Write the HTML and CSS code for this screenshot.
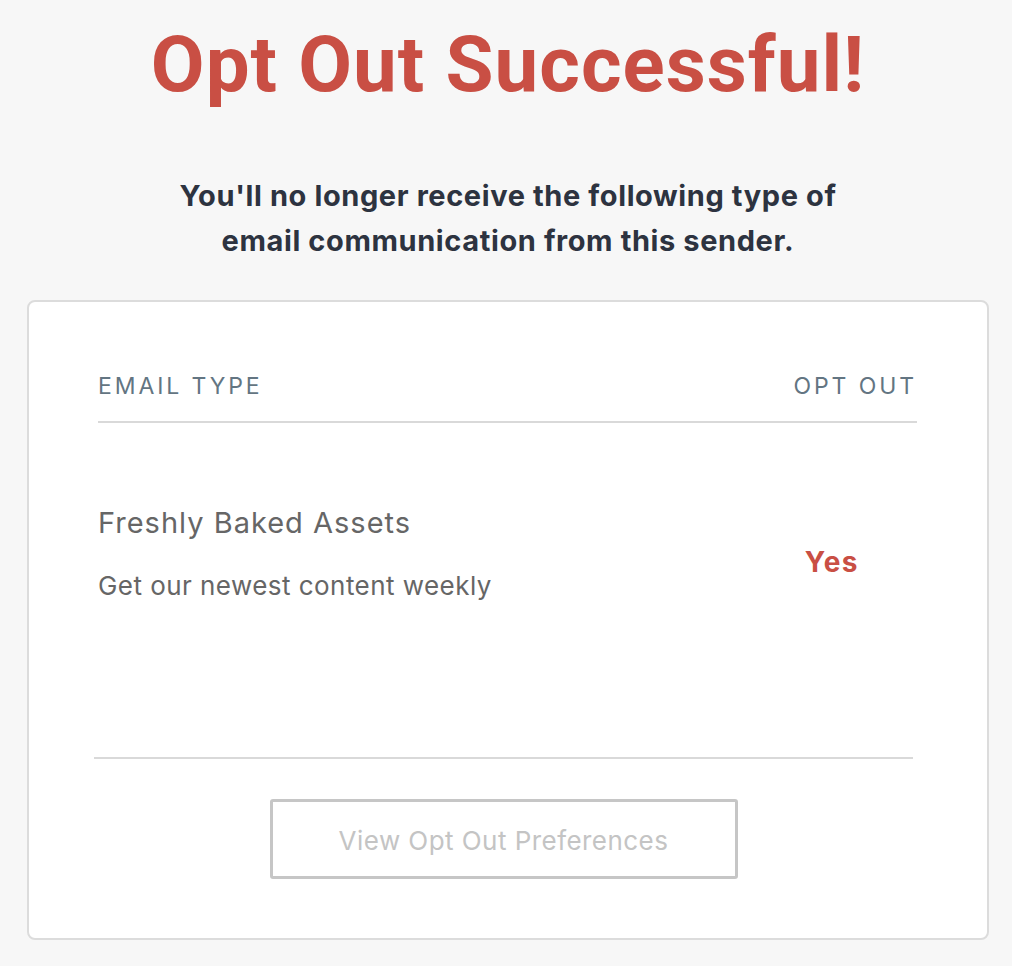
FILE: index.html
```html
<!DOCTYPE html>
<html>
<head>
<meta charset="utf-8">
<link rel="stylesheet" href="styles.css">
</head>
<body>
<main class="page">
  <h1 class="title">Opt Out Successful!</h1>
  <p class="subtitle">You'll no longer receive the following type of<br>email communication from this sender.</p>
  <section class="card">
    <div class="table-head">
      <span class="th">EMAIL TYPE</span>
      <span class="th">OPT OUT</span>
    </div>
    <div class="row">
      <div class="row-info">
        <div class="row-name">Freshly Baked Assets</div>
        <div class="row-desc">Get our newest content weekly</div>
      </div>
      <div class="row-status">Yes</div>
    </div>
    <div class="divider"></div>
    <div class="actions">
      <button class="btn" type="button">View Opt Out Preferences</button>
    </div>
  </section>
</main>
</body>
</html>
```

FILE: styles.css
```css
html, body {
  margin: 0;
  padding: 0;
}
body {
  background: #f7f7f7;
  font-family: Inter, Roboto, "Liberation Sans", sans-serif;
  color: #2e3440;
}
.page {
  padding: 0 23px 26px 27px;
}
.title {
  margin: 26px 0 0;
  text-align: center;
  font-family: Roboto, "Liberation Sans", sans-serif;
  font-size: 78px;
  line-height: 1;
  font-weight: 700;
  letter-spacing: 1px;
  color: #c94f44;
}
.subtitle {
  margin: 69px 0 0;
  text-align: center;
  font-size: 29px;
  line-height: 45px;
  font-weight: 700;
  letter-spacing: 0.6px;
  color: #2d3340;
}
.card {
  margin-top: 37px;
  background: #fff;
  border: 2px solid #dcdcdc;
  border-radius: 8px;
  padding: 0 70px 59px 69px;
}
.table-head {
  display: flex;
  justify-content: space-between;
  align-items: flex-start;
  padding: 73px 0 23px;
  border-bottom: 2px solid #d9d9d9;
}
.th {
  font-size: 23px;
  line-height: 23px;
  letter-spacing: 2.9px;
  color: #637582;
}
.row {
  display: flex;
  justify-content: space-between;
  align-items: flex-start;
  padding-top: 85px;
}
.row-name {
  font-size: 29px;
  line-height: 29px;
  letter-spacing: 1px;
  color: #666;
}
.row-desc {
  margin-top: 36px;
  font-size: 26px;
  line-height: 26px;
  letter-spacing: 0.45px;
  color: #666;
}
.row-status {
  margin-top: 40px;
  margin-right: 58px;
  font-size: 28px;
  line-height: 28px;
  letter-spacing: 1.5px;
  font-weight: 700;
  color: #c94f44;
}
.divider {
  margin: 158px 4px 0 -4px;
  border-top: 2px solid #d9d9d9;
}
.actions {
  display: flex;
  justify-content: center;
  padding-top: 40px;
  margin-left: -8px;
}
.btn {
  width: 468px;
  height: 80px;
  padding: 3px 0 0;
  background: #fff;
  border: 3px solid #c6c6c6;
  border-radius: 3px;
  font-family: Inter, Roboto, "Liberation Sans", sans-serif;
  font-size: 26px;
  letter-spacing: 0.45px;
  color: #c4c4c4;
}
```
